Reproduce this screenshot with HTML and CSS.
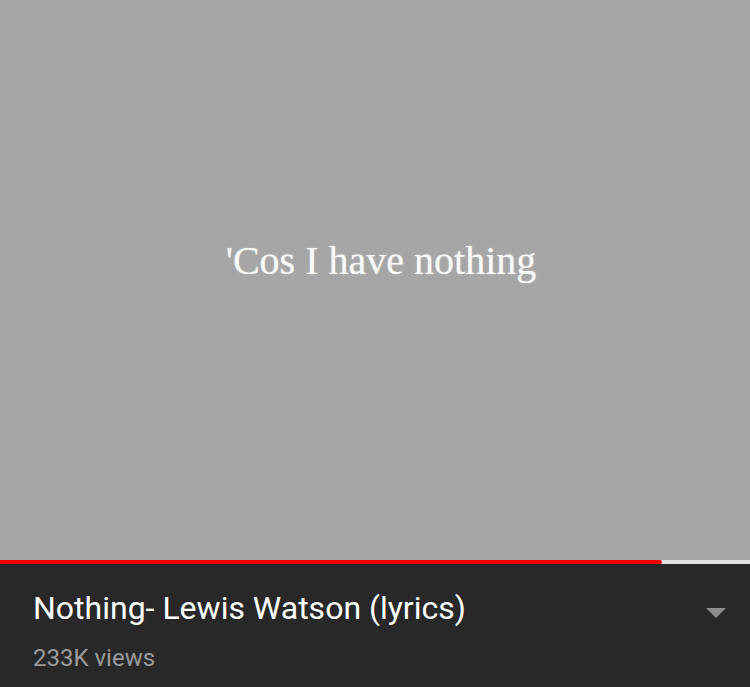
FILE: index.html
```html
<!DOCTYPE html>
<html lang="en">
<head>
    <meta charset="UTF-8">
    <meta name="viewport" content="width=device-width, initial-scale=1.0">
    <title>Nothing- Lewis Watson (lyrics)</title>
    <link rel="stylesheet" href="styles.css">
</head>
<body>
    <div class="player">
        <div class="video">
            <p class="lyric">'Cos I have nothing</p>
        </div>
        <div class="progress">
            <div class="played" style="width: 662px;"></div>
        </div>
    </div>
    <div class="info">
        <div class="title-row">
            <h1 class="title">Nothing- Lewis Watson (lyrics)</h1>
            <svg class="expand" width="20" height="10" viewBox="0 0 20 10">
                <path d="M0 0 L20 0 L10 10 Z" fill="#8e8e8e"/>
            </svg>
        </div>
        <p class="views">233K views</p>
    </div>
</body>
</html>
```

FILE: styles.css
```css
* {
    margin: 0;
    padding: 0;
}

body {
    width: 750px;
    height: 687px;
    overflow: hidden;
    background-color: #282828;
    font-family: Roboto, "Liberation Sans", sans-serif;
}

.video {
    height: 560px;
    background-color: #a6a6a6;
    display: flex;
    align-items: center;
    justify-content: center;
}

.lyric {
    font-family: "Liberation Serif", serif;
    font-size: 40px;
    color: #fafafa;
    text-shadow: 0 0 2px rgba(255, 255, 255, 0.4);
    margin-left: 12px;
    margin-top: -40px;
}

.progress {
    height: 4px;
    background-color: #e2e2e2;
}

.played {
    height: 100%;
    background-color: #ee0000;
    border-radius: 0 2px 2px 0;
}

.info {
    padding: 24px 24px 0 33px;
}

.title-row {
    display: flex;
    align-items: center;
    justify-content: space-between;
}

.title {
    font-size: 32px;
    font-weight: normal;
    color: #ffffff;
    line-height: 40px;
}

.expand {
    margin-top: 9px;
}

.views {
    margin-top: 15px;
    font-size: 24px;
    color: #9b9b9b;
    line-height: 30px;
}
```
